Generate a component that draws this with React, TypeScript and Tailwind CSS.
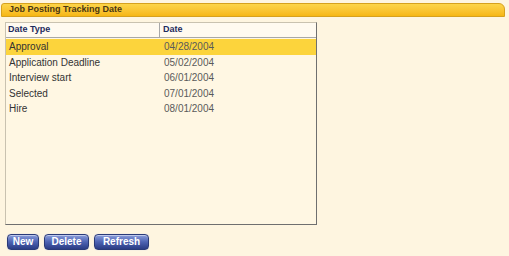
const rows = [
  { type: "Approval", date: "04/28/2004" },
  { type: "Application Deadline", date: "05/02/2004" },
  { type: "Interview start", date: "06/01/2004" },
  { type: "Selected", date: "07/01/2004" },
  { type: "Hire", date: "08/01/2004" },
];

const Btn = ({ label, w }: { label: string; w: string }) => (
  <button
    className={`${w} h-[16px] rounded-[4px] border border-[#2a3a78] bg-gradient-to-b from-[#8d9fdc] via-[#4d62b2] to-[#2b3c84] text-white text-[10px] font-bold leading-none shadow-[inset_0_1px_0_rgba(255,255,255,0.45),0_0_1px_#b9c2e6]`}
  >
    {label}
  </button>
);

export default function App() {
  return (
    <div
      className="w-[509px] h-[256px] bg-[#fef5e0] pt-[3px] overflow-hidden"
      style={{ fontFamily: '"Liberation Sans", Arial, sans-serif' }}
    >
      <div className="ml-[1px] mr-[4px] h-[14px] rounded-tr-[6px] rounded-tl-[3px] border border-[#d6a11e] bg-gradient-to-b from-[#fdd548] to-[#f6b713] flex items-center pl-[7px]">
        <span className="text-[9px] font-bold text-[#4a3612]">
          Job Posting Tracking Date
        </span>
      </div>

      <div className="ml-[5px] mt-[5px] w-[312px] h-[203px] bg-[#fff7e3] border border-t-[#c9c2b0] border-l-[#c9c2b0] border-r-[#6f6f6f] border-b-[#6f6f6f]">
        <div className="flex h-[15px] border-b border-[#a8a8a8] bg-[#fffaf0] text-[9px] font-bold text-[#1f2c5e]">
          <div className="w-[154px] pl-[2px] flex items-center border-r border-[#a8a8a8]">
            Date Type
          </div>
          <div className="pl-[3px] flex items-center">Date</div>
        </div>
        <div className="pt-[1px]">
          {rows.map((r, i) => (
            <div
              key={r.type}
              className={`flex h-[15.5px] items-center text-[10px] ${
                i === 0 ? "bg-[#fcd43c]" : ""
              }`}
            >
              <div className="w-[158px] pl-[3px] text-[#333333]">{r.type}</div>
              <div className="text-[#5a5a5a]">{r.date}</div>
            </div>
          ))}
        </div>
      </div>

      <div className="flex gap-[5px] ml-[7px] mt-[9px]">
        <Btn label="New" w="w-[32px]" />
        <Btn label="Delete" w="w-[45px]" />
        <Btn label="Refresh" w="w-[55px]" />
      </div>
    </div>
  );
}
